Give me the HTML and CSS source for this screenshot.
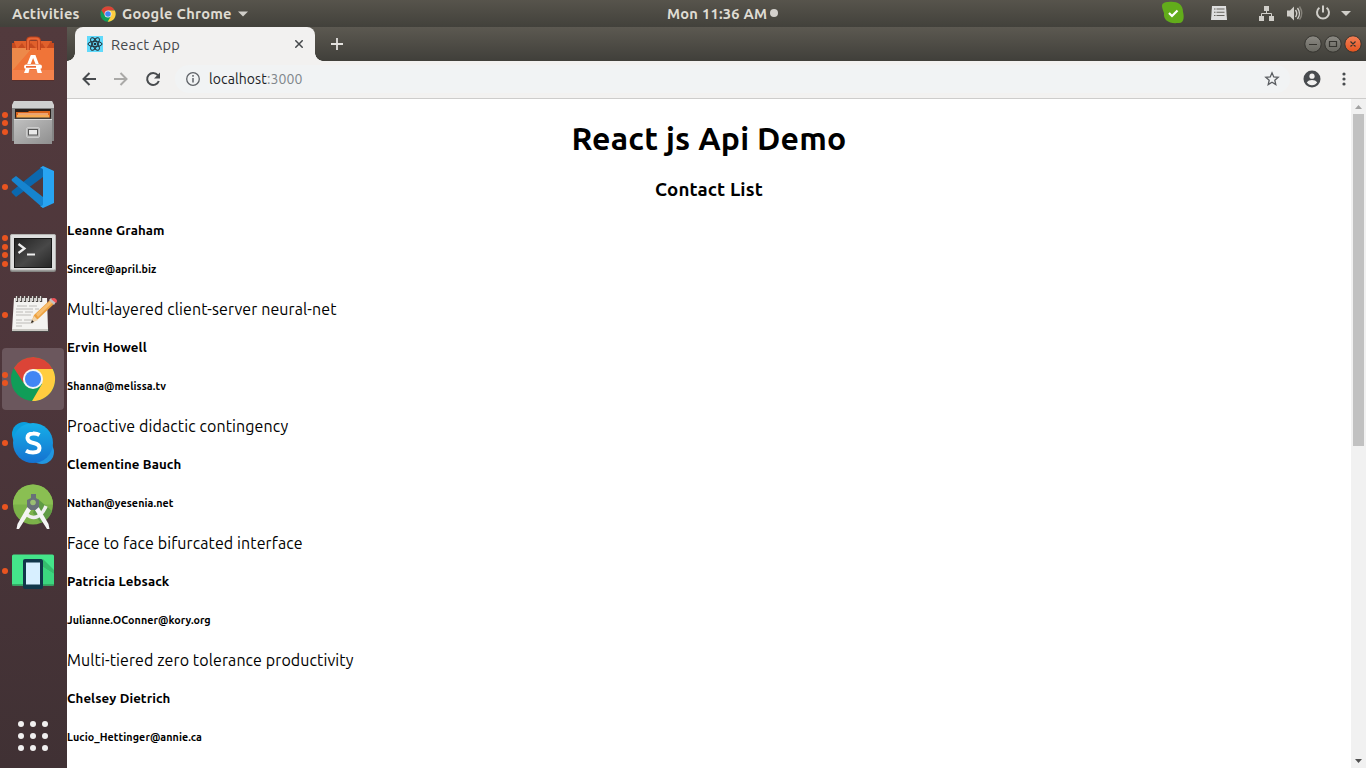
FILE: index.html
```html
<!DOCTYPE html>
<html lang="en">
<head>
<meta charset="utf-8">
<title>React App</title>
<link rel="stylesheet" href="styles.css">
</head>
<body>
<svg width="0" height="0" class="defs" aria-hidden="true">
  <defs>
    <symbol id="chrome" viewBox="0 0 48 48">
      <circle cx="24" cy="24" r="23" fill="#109d58"/>
      <path d="M4 12.600A23 23 0 0 1 44.500 13.500H24L14 28z" fill="#db4437"/>
      <path d="M24 13.500H44.500A23 23 0 0 1 23 47L33.500 29z" fill="#ffcd40"/>
      <circle cx="24" cy="24" r="10.500" fill="#f5f5f5"/>
      <circle cx="24" cy="24" r="8.400" fill="#4285f4"/>
    </symbol>
  </defs>
</svg>
<div class="desktop">
  <header class="topbar">
    <span class="activities">Activities</span>
    <svg class="menu-chrome" width="16" height="16"><use href="#chrome"/></svg>
    <span class="appname">Google Chrome</span>
    <svg class="menu-arrow" width="10" height="6"><path d="M0 .5h10L5 5.500z" fill="#d0cec9"/></svg>
    <span class="clock">Mon 11:36 AM</span>
    <span class="clock-dot"></span>
    <svg class="tray" width="210" height="27" viewBox="1156 0 210 27">
      <path d="M1162 6c0-3 3-4 6-4 8-1 15 1 15 10 1 3 2 12-5 11-9 1-15-3-14-10-1-3-2-5-2-7z" fill="#62ac1b"/>
      <path d="M1169 13l3 3 5.500-5.500" fill="none" stroke="#fff" stroke-width="2.200"/>
      <path d="M1212 6h14l1 14h-16z" fill="#dedede"/>
      <path d="M1214 9h1.500m1 0h8m-10.500 3.200h1.500m1 0h8m-10.500 3.300h1.500m1 0h8" stroke="#66645e" stroke-width="1.100"/>
      <path d="M1264 6h5v5h-5zM1259 16h5v5h-5zM1269 16h5v5h-5z" fill="#d0cec9"/>
      <path d="M1266.500 11v2.500M1261.500 16v-2.500h10v2.500" fill="none" stroke="#d0cec9"/>
      <path d="M1287 10.500h3l4-4v14l-4-4h-3z" fill="#d0cec9"/>
      <path d="M1295.500 10q2.500 3.500 0 7M1297.500 8q4 5.500 0 11" fill="none" stroke="#d0cec9" stroke-width="1.400"/>
      <path d="M1299.500 6.500q4.500 7 0 13" fill="none" stroke="#85827a" stroke-width="1.400"/>
      <path d="M1319.400 7.800a6 6 0 1 0 7.200 0M1323 5.500v7" fill="none" stroke="#d0cec9" stroke-width="2"/>
      <path d="M1341 11h10l-5 5z" fill="#d0cec9"/>
    </svg>
  </header>
  <div class="main">
    <nav class="dock">
      <div class="cell">
        <svg width="44" height="48" viewBox="11 35 44 48">
          <path d="M12 43h2v-2h38v2h2v12H12z" fill="#c74a1f"/>
          <path d="M14 41l3 8 5-6 4 6 5-6 6 6 5-6 4 6 5-8z" fill="#e0602b"/>
          <path d="M12 48h42v32H12z" fill="#f07438"/><path d="M12 48h20l-20 23z" fill="#eb9555" opacity=".65"/>
          <path d="M12 70h42v10H12z" fill="#f4824c"/><path d="M12 80h42v1H12z" fill="#572f2c"/>
          <path d="M28 50V41q0-2.500 3-2.500h5q3 0 3 2.500v9" fill="none" stroke="#bf441c" stroke-width="3.800"/><path d="M28 50V41q0-2.500 3-2.500h5q3 0 3 2.500v9" fill="none" stroke="#e76738" stroke-width="2"/>
          <path d="M30.800 55h4.600l3.400 9h-3.300l-2.400-6-2.400 6h-3.500zM25.500 69h4l-1 4h-4.500zM36.500 69h4l1.500 4h-4.500z" fill="#fff"/><rect x="24" y="64.500" width="18" height="4.500" rx="2.200" fill="#fff"/><path d="M26 66h10v1.700H26z" fill="#ed6732"/>
        </svg>
      </div>
      <div class="cell"><div class="dots"><i></i><i></i><i></i></div>
        <svg width="44" height="48" viewBox="11 99 44 48">
          <defs><linearGradient id="cab" x2="1" y2="1"><stop stop-color="#c1c1c1"/><stop offset="1" stop-color="#8f8f8f"/></linearGradient></defs>
          <path d="M14 101h38l2 5v35H12v-35z" fill="#858585"/><path d="M14 101h38l2 4v3H12v-3z" fill="#cfcfcf"/>
          <path d="M15 109h36v11H15z" fill="#29201c"/><path d="M16 112h12l1-1h21v8H16z" fill="#da651c"/><path d="M17 115h32v5H17z" fill="#f8ab51"/><path d="M18 113.500h30v1H18z" fill="#fce4c9"/><path d="M15 117.500h36v2H15z" fill="#423e3a"/>
          <path d="M14 119h38v25H14z" fill="url(#cab)"/><path d="M14 119h38v1H14z" fill="#ddd"/>
          <rect x="26.500" y="127.500" width="13" height="10" rx="1.500" fill="#b8b8b8" stroke="#ccc"/><rect x="28.500" y="129.500" width="9" height="5.500" fill="#e9e9e9" stroke="#565656"/>
        </svg>
      </div>
      <div class="cell"><div class="dots"><i></i></div>
        <svg width="44" height="48" viewBox="11 163 44 48">
          <path d="M12 193l4 4 27-20V166L12 191q-1 1 0 2z" fill="#0b68ae"/>
          <path d="M12 179l4-3 27 21v11L12 181q-1-1 0-2z" fill="#1684cf"/>
          <path d="M43 166l11 5v32l-11 5-3-2q3 0 3-2v-34q0-2-3-2z" fill="#28a4f2"/>
        </svg>
      </div>
      <div class="cell"><div class="dots"><i></i><i></i><i></i><i></i></div>
        <svg class="terminal" width="48" height="40" viewBox="9 232 48 40">
          <defs><linearGradient id="term" x2="1" y2="1"><stop stop-color="#242424"/><stop offset=".55" stop-color="#484848"/><stop offset="1" stop-color="#272727"/></linearGradient></defs>
          <rect x="10" y="234" width="46" height="38" rx="2" fill="#858583"/><rect x="10.500" y="234.500" width="45" height="35.500" rx="1.500" fill="#dedede" stroke="#b4b4b2"/>
          <path d="M14 238h38v30H14z" fill="#171717"/><path d="M15 239h36v28H15z" fill="url(#term)"/>
          <path d="M18.500 244l6 4.500-6 4.500" fill="none" stroke="#eee" stroke-width="2.200"/><path d="M27 254.500h8" stroke="#eee" stroke-width="2"/>
        </svg>
      </div>
      <div class="cell"><div class="dots"><i></i></div>
        <svg width="48" height="42" viewBox="9 294 48 42">
          <path d="M12 328h37v4H12z" fill="#494545"/><path d="M14 298h33l1 32H12z" fill="#f4f3f1"/><path d="M12 329h36v2H12z" fill="#c9c7c2"/>
          <path d="M17 296v6m4-6v6m4-6v6m4-6v6m4-6v6m4-6v6m4-6v6" stroke="#4b4845" stroke-width="2.400"/><path d="M16.500 296v5m4-5v5m4-5v5m4-5v5m4-5v5m4-5v5m4-5v5" stroke="#dedbd7" stroke-width="1.200"/>
          <path d="M17 306h10m2 0h8M16 309h17m2 0h4M16 312h7m2 0h8M16 315h15M16 320h6m2 0h8M16 323h17M16 326h6" stroke="#bdbbb8"/>
          <path d="M31 323l3-8 16-15 4 4-16 15z" fill="#eda13f"/><path d="M36 314l15-14 2 2-15 15z" fill="#f7be70"/><path d="M31 323l3-7 4 4z" fill="#efd4ad"/><path d="M31 323l1-3 2 2z" fill="#222"/><path d="M49 300l2-2 5 4-2 3z" fill="#c6c2c0"/><path d="M51 299q3-2 5 0t0 4z" fill="#ed5359"/>
        </svg>
      </div>
      <div class="cell active"><div class="dots"><i></i><i></i></div><svg width="46" height="46"><use href="#chrome"/></svg></div>
      <div class="cell"><div class="dots"><i></i></div>
        <svg width="44" height="46" viewBox="11 420 44 46">
          <defs><linearGradient id="sky" x2="0" y2="1"><stop stop-color="#15afe8"/><stop offset="1" stop-color="#1572d0"/></linearGradient></defs>
          <circle cx="24" cy="434" r="12" fill="#0b9fdd"/><circle cx="42" cy="452" r="12" fill="#2196e0"/><circle cx="33" cy="443" r="20" fill="url(#sky)"/>
          <path d="M39.500 435q-3-1.800-6.500-1.500-5.500.3-5.500 4.500 0 3.700 6 5 6 1.300 6 5 0 4.500-6.500 4.500-4 0-7-1.800" fill="none" stroke="#fff" stroke-width="4"/>
        </svg>
      </div>
      <div class="cell"><div class="dots"><i></i></div>
        <svg width="44" height="48" viewBox="11 483 44 48">
          <circle cx="33" cy="504.500" r="20" fill="#7bb249"/><path d="M13 504.500a20 20 0 0 1 40 0z" fill="#8abf52"/><path d="M38 499l14 12a20 20 0 0 1-11 12l-8-10z" fill="#609b45"/>
          <path d="M26 514q8 7 15 0 3-3 5-8" fill="none" stroke="#eee" stroke-width="3.500"/>
          <path d="M29 504l4 3-14 22h-2.500l1-5zM37 504l-4 3 14 22h2.500l-1-5z" fill="#f4f4f4"/>
          <path d="M31 494h5v4l3 2v7l-3.500 3h-5l-3.500-3v-7l4-2z" fill="#687078"/><circle cx="33" cy="502.500" r="2.800" fill="#9abe72"/>
        </svg>
      </div>
      <div class="cell"><div class="dots"><i></i></div>
        <svg width="44" height="40" viewBox="11 551 44 40">
          <rect x="12" y="554.500" width="42" height="31" rx="1.500" fill="#44e58a"/><path d="M43 559l11 11v4L43 567z" fill="#35bd6e"/><path d="M43 567l11 7v10H43z" fill="#3cd67f"/><path d="M12 584h42v1.500H12z" fill="#32ad65"/>
          <rect x="23" y="559" width="20" height="30" rx="2" fill="#11374a"/><path d="M26 562.500h14v22H26z" fill="#d7efff"/>
        </svg>
      </div>
      <svg class="apps" width="32" height="32" viewBox="0 0 32 32" fill="#f1f0f0"><circle cx="4" cy="4" r="3"/><circle cx="16" cy="4" r="3"/><circle cx="28" cy="4" r="3"/><circle cx="4" cy="16" r="3"/><circle cx="16" cy="16" r="3"/><circle cx="28" cy="16" r="3"/><circle cx="4" cy="28" r="3"/><circle cx="16" cy="28" r="3"/><circle cx="28" cy="28" r="3"/></svg>
    </nav>
    <section class="window">
      <div class="tabstrip">
        <div class="tab">
          <svg width="16" height="16" viewBox="0 0 16 16"><path d="M0 0h16v16H0z" fill="#61dafb"/><g fill="none" stroke="#222d35"><ellipse cx="8" cy="8" rx="7" ry="2.700"/><ellipse cx="8" cy="8" rx="7" ry="2.700" transform="rotate(60 8 8)"/><ellipse cx="8" cy="8" rx="7" ry="2.700" transform="rotate(120 8 8)"/></g><circle cx="8" cy="8" r="1.300" fill="#222d35"/></svg>
          <span class="tabtitle">React App</span>
          <svg class="tabclose" width="8" height="8"><path d="M.3.3l7.400 7.400m0-7.400l-7.400 7.400" stroke="#45484b" stroke-width="1.500"/></svg>
        </div>
        <svg class="newtab" width="12" height="12"><path d="M6 0v12M0 6h12" stroke="#e4e2df" stroke-width="1.800"/></svg>
        <svg class="controls" width="60" height="20" viewBox="1303 34 60 20">
          <defs><linearGradient id="btn" x2="0" y2="1"><stop stop-color="#8c8a84"/><stop offset="1" stop-color="#686760"/></linearGradient><linearGradient id="cls" x2="0" y2="1"><stop stop-color="#f38057"/><stop offset="1" stop-color="#e4541f"/></linearGradient></defs>
          <g stroke="#35342f"><circle cx="1313" cy="44" r="8.200" fill="url(#btn)"/><circle cx="1333" cy="44" r="8.200" fill="url(#btn)"/><circle cx="1353" cy="44" r="8.200" fill="url(#cls)"/><path d="M1309 44.500h8M1329.500 41.500h7v5h-7zM1350.500 41.500l5 5m0-5l-5 5" fill="none" stroke-width="1.200"/></g>
        </svg>
      </div>
      <div class="toolbar">
        <svg width="100" height="20" viewBox="76 69 100 20" fill="none" stroke-width="2"><path d="M96 79H83.500m6-6l-6 6 6 6" stroke="#484b4e"/><path d="M114 79h12.500m-6-6l6 6-6 6" stroke="#aaa9a7"/><path d="M157.800 75.200a6 6 0 1 0 1 5.800" stroke="#484b4e"/><path d="M160 72.500v6h-6z" fill="#484b4e"/></svg>
        <div class="omnibox">
          <svg width="16" height="16"><circle cx="8" cy="8" r="6.300" fill="none" stroke="#5f6368" stroke-width="1.300"/><path d="M8 7v4.500M8 4v1.700" stroke="#5f6368" stroke-width="1.500"/></svg>
          <span class="url">localhost<span>:3000</span></span>
          <svg class="star" width="16" height="16"><path d="M8 1.800l1.750 4.100 4.450.4-3.400 2.900 1 4.400L8 11.300l-3.800 2.300 1-4.400-3.400-2.900 4.450-.4z" fill="none" stroke="#5a5d61" stroke-width="1.300"/></svg>
        </div>
        <svg class="profile" width="18" height="18"><circle cx="9" cy="9" r="8.500" fill="#484b4e"/><circle cx="9" cy="6.200" r="2.600" fill="#f2f1f0"/><path d="M3.800 12.300Q5.500 10 9 10t5.200 2.300Q12.500 15.200 9 15.200t-5.200-2.900z" fill="#f2f1f0"/></svg>
        <svg class="kebab" width="4" height="14" fill="#484b4e"><circle cx="2" cy="2" r="1.600"/><circle cx="2" cy="7" r="1.600"/><circle cx="2" cy="12" r="1.600"/></svg>
      </div>
      <div class="viewport">
        <main class="page">
          <h1>React js Api Demo</h1>
          <h3>Contact List</h3>
          <article><h5>Leanne Graham</h5><h6>Sincere@april.biz</h6><p>Multi-layered client-server neural-net</p></article>
          <article><h5>Ervin Howell</h5><h6>Shanna@melissa.tv</h6><p>Proactive didactic contingency</p></article>
          <article><h5>Clementine Bauch</h5><h6>Nathan@yesenia.net</h6><p>Face to face bifurcated interface</p></article>
          <article><h5>Patricia Lebsack</h5><h6>Julianne.OConner@kory.org</h6><p>Multi-tiered zero tolerance productivity</p></article>
          <article><h5>Chelsey Dietrich</h5><h6>Lucio_Hettinger@annie.ca</h6></article>
        </main>
        <div class="scrollbar">
          <svg width="7" height="4"><path d="M0 4h7L3.500 0z" fill="#a2a2a2"/></svg>
          <div class="thumb"></div>
          <svg class="down" width="7" height="4"><path d="M0 0h7L3.500 4z" fill="#505050"/></svg>
        </div>
      </div>
    </section>
  </div>
</div>
</body>
</html>
```
FILE: styles.css
```css
* { box-sizing: border-box; }
body { margin: 0; font-family: Ubuntu, "Noto Sans", sans-serif; overflow: hidden; }
svg { display: block; flex: none; }
.defs { position: absolute; }
.desktop { width: 1366px; height: 768px; display: flex; flex-direction: column; }
.topbar { height: 27px; flex: none; display: flex; align-items: center; background: linear-gradient(#57544c, #42413b); color: #dfdbd2; font-size: 14.670px; font-weight: 700; letter-spacing: .25px; line-height: 17px; white-space: nowrap; }
.topbar span { padding-bottom: 1px; }
.activities { width: 88px; padding-left: 12px; }
.menu-chrome { margin-left: 12px; }
.appname { margin-left: 6px; width: 111px; }
.menu-arrow { margin-left: 5px; }
.clock { margin-left: 419px; width: 99px; }
.clock-dot { width: 8px; height: 8px; margin-left: 4px; margin-bottom: 1px; border-radius: 50%; background: #d3d0cc; }
.tray { margin-left: auto; }
.main { flex: 1; min-height: 0; display: flex; }
.dock { width: 67px; flex: none; display: flex; flex-direction: column; background: linear-gradient(#523a3d, #4d363b 50%, #403134); }
.cell { position: relative; height: 64px; flex: none; display: flex; align-items: center; justify-content: center; }
.cell svg { margin-right: 1px; }
.cell .terminal { margin-top: 2px; }
.active::before { content: ""; position: absolute; inset: 1px 3px 1px 2px; border-radius: 4px; background: #6b575d; }
.active svg { position: relative; }
.dots { position: absolute; z-index: 1; left: 2px; top: 0; height: 64px; display: flex; flex-direction: column; justify-content: center; gap: 2.500px; }
.dots i { width: 6px; height: 6px; border-radius: 50%; background: #e95420; }
.apps { margin: auto 0 16px 17px; }
.window { flex: 1; min-width: 0; display: flex; flex-direction: column; }
.tabstrip { height: 34px; flex: none; display: flex; align-items: center; background: linear-gradient(#5c5951, #403f3a); }
.tab { position: relative; width: 240px; height: 34px; margin-left: 8px; padding: 0 12px; display: flex; align-items: center; background: #f2f1f0; border-radius: 8px 8px 0 0; }
.tab::before, .tab::after { content: ""; position: absolute; bottom: 0; width: 8px; height: 8px; }
.tab::before { left: -8px; background: radial-gradient(circle at 0 0, transparent 7.500px, #f2f1f0 8px); }
.tab::after { right: -8px; background: radial-gradient(circle at 100% 0, transparent 7.500px, #f2f1f0 8px); }
.tabtitle { margin-left: 8px; font-size: 14.670px; letter-spacing: .2px; color: #45484b; white-space: nowrap; }
.tabclose { margin-left: auto; }
.newtab { margin-left: 16px; }
.controls { margin-left: auto; margin-right: 3px; }
.toolbar { height: 38px; flex: none; display: flex; align-items: center; background: #f2f1f0; border-bottom: 1px solid #cdcccb; padding: 0 20px 1px 9px; }
.omnibox { flex: 1; height: 28px; display: flex; align-items: center; margin-left: -1px; padding: 0 18px 0 10px; background: #f1f3f4; border-radius: 14px; }
.url { margin-left: 8px; font-size: 14px; letter-spacing: .1px; color: #202124; }
.url span { color: #80868b; }
.star { margin-left: auto; margin-right: -8px; }
.profile { margin-left: 13px; }
.kebab { margin-left: 21px; }
.viewport { flex: 1; min-height: 0; display: flex; background: #fff; }
.page { flex: 1; overflow: hidden; color: #000; }
h1, h3, h5, h6, p { margin: 0; font-weight: 700; white-space: nowrap; }
h1 { margin-top: 21px; font-size: 32px; letter-spacing: .2px; line-height: 37px; text-align: center; }
h3 { margin-top: 22px; margin-bottom: 11px; font-size: 18.720px; letter-spacing: .15px; line-height: 21px; text-align: center; }
article { height: 117px; }
h5 { font-size: 13.280px; letter-spacing: .08px; line-height: 39px; }
h6 { font-size: 10.720px; letter-spacing: .09px; line-height: 39px; }
p { font-size: 16px; letter-spacing: .1px; line-height: 40px; font-weight: 400; }
.scrollbar { width: 15px; flex: none; display: flex; flex-direction: column; align-items: center; background: #f1f1f1; padding: 6px 0 5px; }
.thumb { width: 11px; height: 332px; margin-top: 5px; background: #c1c1c1; }
.down { margin-top: auto; }
```
